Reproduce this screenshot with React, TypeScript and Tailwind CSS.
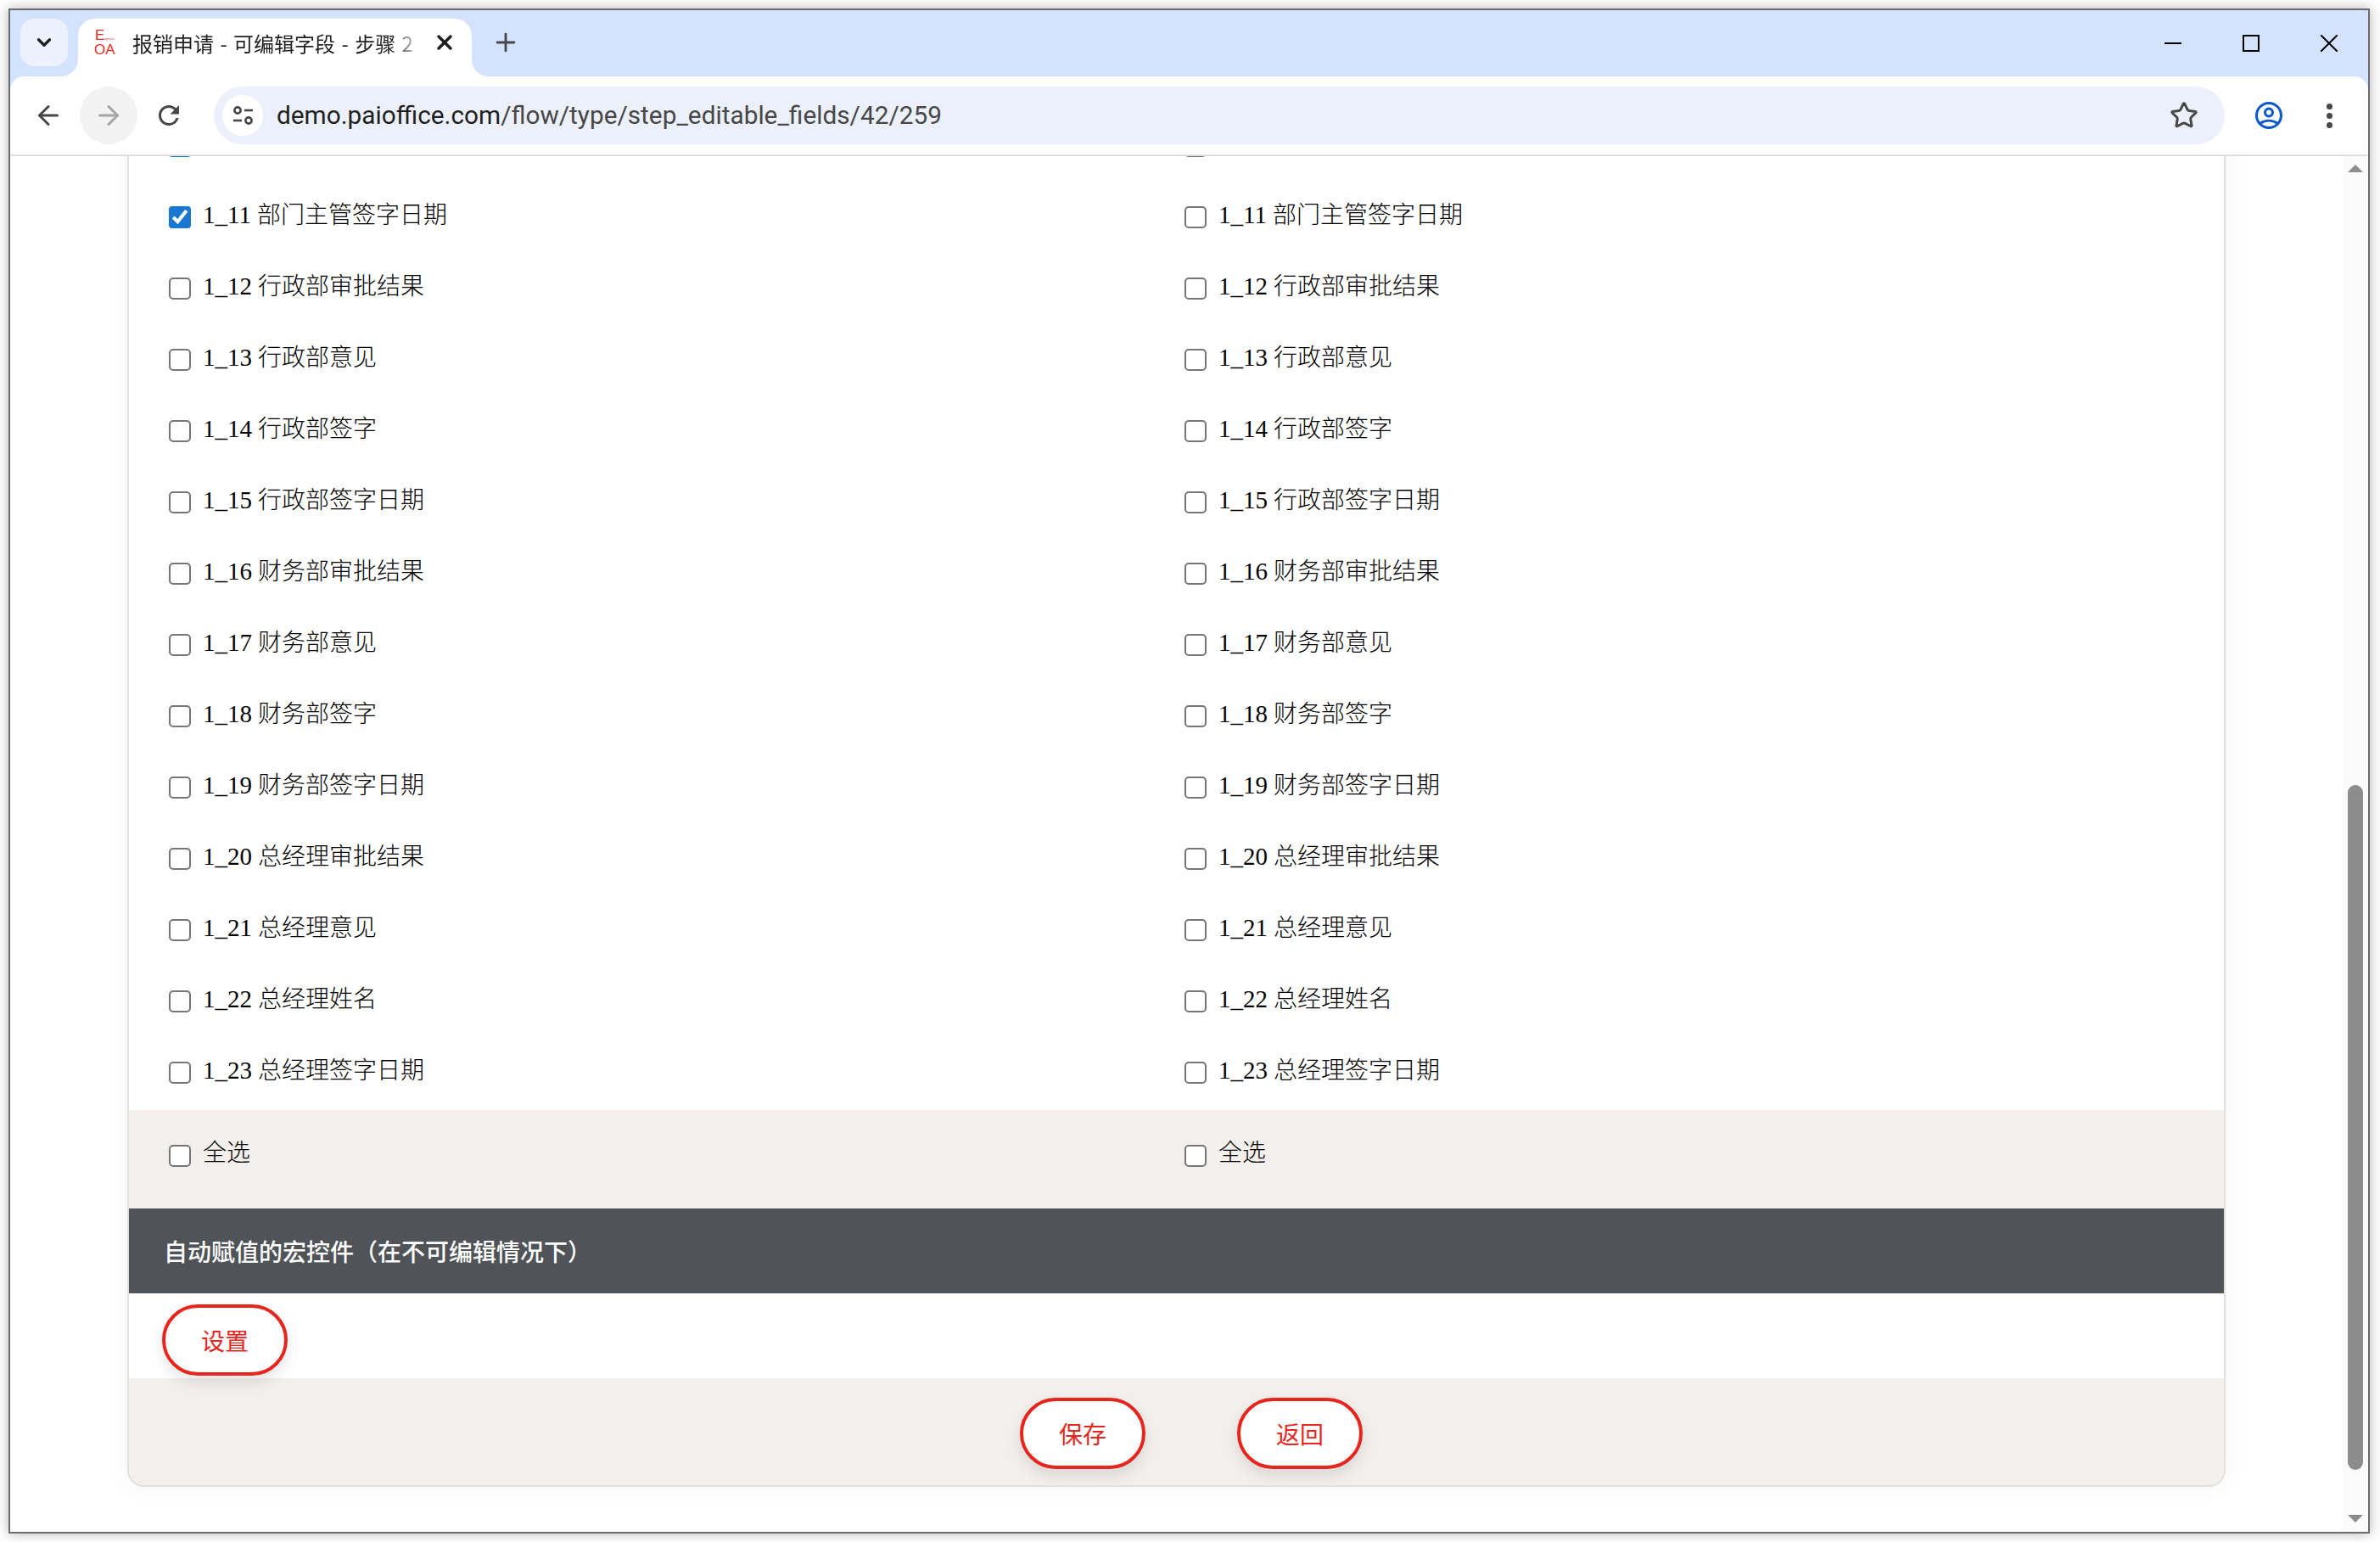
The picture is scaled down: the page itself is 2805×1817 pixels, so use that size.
import { ArrowLeft, ArrowRight, Star, X, Plus, ChevronDown } from 'lucide-react';

const serif = "font-['Liberation_Serif','Noto_Sans_CJK_SC',serif]";

const rows = [
  ['1_11', '部门主管签字日期'],
  ['1_12', '行政部审批结果'],
  ['1_13', '行政部意见'],
  ['1_14', '行政部签字'],
  ['1_15', '行政部签字日期'],
  ['1_16', '财务部审批结果'],
  ['1_17', '财务部意见'],
  ['1_18', '财务部签字'],
  ['1_19', '财务部签字日期'],
  ['1_20', '总经理审批结果'],
  ['1_21', '总经理意见'],
  ['1_22', '总经理姓名'],
  ['1_23', '总经理签字日期'],
];

function Check({ checked = false }: { checked?: boolean }) {
  return (
    <input
      type="checkbox"
      defaultChecked={checked}
      className="m-0 w-[13px] h-[13px] shrink-0 [zoom:2] accent-[#1976d2]"
    />
  );
}

function Field({ id, name, checked = false }: { id: string; name: string; checked?: boolean }) {
  return (
    <label className="flex items-center gap-[14px] h-[84px] pb-[4px]">
      <Check checked={checked} />
      <span className="text-[28px] leading-[32px] font-light text-black relative -top-[3px]">
        <span className="text-[29px]">{id}</span> {name}
      </span>
    </label>
  );
}

function SelectAll() {
  return (
    <label className="flex items-center gap-[14px]">
      <Check />
      <span className="text-[28px] leading-[32px] font-light text-black relative -top-[3px]">全选</span>
    </label>
  );
}

function RedButton({ children }: { children: string }) {
  return (
    <button className="w-[148px] h-[84px] rounded-full border-4 border-[#e8251c] bg-white text-[#e8251c] text-[28px] font-['Noto_Sans_CJK_SC',sans-serif] shadow-[0_8px_18px_rgba(0,0,0,0.1)]">
      {children}
    </button>
  );
}

function TabFoot({ side }: { side: 'left' | 'right' }) {
  return (
    <svg
      width="20"
      height="20"
      viewBox="0 0 20 20"
      className={side === 'left' ? 'absolute bottom-0 -left-[20px]' : 'absolute bottom-0 -right-[20px]'}
    >
      <path d={side === 'left' ? 'M20 0V20H0C11 20 20 11 20 0Z' : 'M0 0V20H20C9 20 0 11 0 0Z'} fill="#ffffff" />
    </svg>
  );
}

function Favicon() {
  return (
    <div className="w-[26px] h-[34px] shrink-0 relative text-[#ee2a24] font-['Liberation_Sans',sans-serif] leading-none">
      <span className="absolute left-[1px] top-0 text-[17px]">E</span>
      <span className="absolute left-[12px] top-[11px] text-[4px]">xpress</span>
      <span className="absolute left-0 top-[17px] text-[17px]">OA</span>
    </div>
  );
}

export default function App() {
  return (
    <div className="w-[2805px] h-[1817px] bg-white overflow-hidden pt-[10px] pl-[10px]">
      <div className="w-[2783px] h-[1797px] border-2 border-[#6c6c70] flex flex-col shadow-[0_0_14px_rgba(0,0,0,0.3)] overflow-hidden">
        {/* tab strip */}
        <div className="h-[78px] shrink-0 bg-[#d3e3fd] flex items-start pt-[10px] pl-[12px]">
          <div className="w-[56px] h-[56px] rounded-[16px] bg-[#ecf2fd] flex items-center justify-center text-[#1f1f1f]">
            <ChevronDown size={26} strokeWidth={3} />
          </div>
          <div className="relative ml-[12px] w-[464px] h-[68px] bg-white rounded-t-[20px] flex items-start pt-[11px] pl-[19px]">
            <TabFoot side="left" />
            <TabFoot side="right" />
            <Favicon />
            <span className="ml-[19px] mt-[3px] w-[340px] whitespace-nowrap text-[24px] leading-[30px] text-[#1f1f1f] font-['Noto_Sans_CJK_SC',sans-serif] [word-spacing:2px] [mask-image:linear-gradient(to_right,black_305px,rgba(0,0,0,0.2)_335px)]">
              报销申请 - 可编辑字段 - 步骤 2
            </span>
            <X size={28} strokeWidth={3} className="ml-[14px] mt-[3px] text-[#1f1f1f]" />
          </div>
          <Plus size={34} strokeWidth={2} className="ml-[23px] mt-[11px] text-[#474747]" />
          <div className="ml-auto flex items-center mt-[19px] pr-[36px] gap-[72px] text-black">
            <svg width="20" height="20" viewBox="0 0 20 20" fill="none" stroke="currentColor" strokeWidth="2">
              <path d="M0 10H20" />
            </svg>
            <svg width="20" height="20" viewBox="0 0 20 20" fill="none" stroke="currentColor" strokeWidth="2">
              <rect x="1" y="1" width="18" height="18" />
            </svg>
            <svg width="20" height="20" viewBox="0 0 20 20" fill="none" stroke="currentColor" strokeWidth="2">
              <path d="M0 0L20 20M20 0L0 20" />
            </svg>
          </div>
        </div>

        {/* toolbar */}
        <div className="bg-[#d3e3fd] shrink-0">
          <div className="h-[92px] bg-white rounded-t-[16px] flex items-center pl-[27px]">
            <ArrowLeft size={36} strokeWidth={2} className="text-[#474747] mr-[19px]" />
            <div className="w-[68px] h-[68px] rounded-full bg-[#f2f2f2] flex items-center justify-center text-[#a6a6a6]">
              <ArrowRight size={36} strokeWidth={2} />
            </div>
            <svg width="36" height="36" viewBox="0 0 24 24" fill="#474747" className="ml-[19px] mr-[35px]">
              <path d="M17.65 6.35A7.958 7.958 0 0 0 12 4c-4.42 0-7.99 3.58-7.99 8s3.57 8 7.99 8c3.73 0 6.84-2.55 7.73-6h-2.08A5.99 5.99 0 0 1 12 18c-3.31 0-6-2.69-6-6s2.69-6 6-6c1.66 0 3.14.69 4.22 1.78L13 11h7V4l-2.35 2.35z" />
            </svg>
            <div className="w-[2370px] h-[68px] rounded-full bg-[#ebf0fa] flex items-center pl-[10px] pr-[31px]">
              <div className="w-[48px] h-[48px] rounded-full bg-white flex items-center justify-center shrink-0">
                <svg width="25" height="22" viewBox="0 0 25 22" fill="none" stroke="#474747" strokeWidth="2.6">
                  <circle cx="6" cy="5" r="3.6" />
                  <path d="M14 5H24" />
                  <path d="M1 17H11" />
                  <circle cx="19" cy="17" r="3.6" />
                </svg>
              </div>
              <span className="ml-[16px] text-[29.8px] font-['Roboto',sans-serif] text-[#1f1f1f] whitespace-nowrap">
                demo.paioffice.com<span className="text-[#474747]">/flow/type/step_editable_fields/42/259</span>
              </span>
              <Star size={34} strokeWidth={2.1} className="ml-auto text-[#474747]" />
            </div>
            <svg width="32" height="32" viewBox="0 0 32 32" fill="none" stroke="#0b57d0" strokeWidth="3" className="ml-[36px]">
              <circle cx="16" cy="16" r="14.5" />
              <circle cx="16" cy="12.5" r="4.5" />
              <path d="M5.5 25.5C12 21 20 21 26.5 25.5" />
            </svg>
            <div className="ml-[52px] flex flex-col gap-[4px]">
              <div className="w-[7px] h-[7px] rounded-full bg-[#474747]" />
              <div className="w-[7px] h-[7px] rounded-full bg-[#474747]" />
              <div className="w-[7px] h-[7px] rounded-full bg-[#474747]" />
            </div>
          </div>
          <div className="h-[2px] bg-[#e0e0e0]" />
        </div>

        {/* page */}
        <div className="flex-1 flex min-h-0 bg-white">
          <div className={`flex-1 overflow-hidden px-[138px] ${serif}`}>
            <div className="-mt-[54px] border-2 border-[#e0e0dc] rounded-b-[20px] overflow-hidden bg-white shadow-[0_0_30px_rgba(0,0,0,0.05)]">
              <div className="grid grid-cols-[1197px_1fr] pl-[47px]">
                <label className="flex items-center h-[84px] pb-[4px]">
                  <Check checked />
                </label>
                <label className="flex items-center h-[84px] pb-[4px]">
                  <Check />
                </label>
                {rows.map(([id, name], i) => (
                  <div key={id} className="contents">
                    <Field id={id} name={name} checked={i === 0} />
                    <Field id={id} name={name} />
                  </div>
                ))}
              </div>
              <div className="grid grid-cols-[1197px_1fr] pl-[47px] h-[116px] bg-[#f2efec] pb-[8px]">
                <SelectAll />
                <SelectAll />
              </div>
              <div className="h-[100px] bg-[#505458] flex items-center pl-[41px] pt-[6px] text-white text-[28px] font-medium">
                自动赋值的宏控件（在不可编辑情况下）
              </div>
              <div className="h-[100px] pt-[13px] pl-[39px] bg-white">
                <RedButton>设置</RedButton>
              </div>
              <div className="h-[126px] pt-[23px] pl-[35px] bg-[#f2efec] flex justify-center gap-[108px]">
                <RedButton>保存</RedButton>
                <RedButton>返回</RedButton>
              </div>
            </div>
          </div>

          {/* scrollbar */}
          <div className="w-[30px] shrink-0 bg-[#fbfbfb] flex flex-col items-center pt-[10px]">
            <svg width="18" height="9" viewBox="0 0 18 9"><path d="M9 0L18 9H0Z" fill="#8c8c8c" /></svg>
            <div className="w-[18px] h-[807px] mt-[722px] rounded-full bg-[#8c8c8c]" />
            <svg width="18" height="9" viewBox="0 0 18 9" className="mt-[53px]"><path d="M0 0H18L9 9Z" fill="#8c8c8c" /></svg>
          </div>
        </div>
      </div>
    </div>
  );
}
